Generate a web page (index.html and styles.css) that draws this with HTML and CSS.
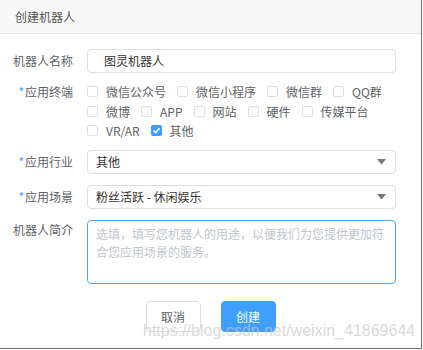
FILE: index.html
```html
<!DOCTYPE html>
<html lang="zh-CN">
<head>
  <meta charset="UTF-8" />
  <title>创建机器人</title>
  <meta name="viewport" content="width=device-width, initial-scale=1.0" />
  <link rel="stylesheet" href="styles.css">
</head>
<body>

<div class="dialog">
  <div class="dialog-header">创建机器人</div>

  <div class="dialog-body">
    <div class="form-row row-name">
      <div class="form-label">机器人名称</div>
      <div class="form-field">
        <div class="input name-input">图灵机器人</div>
      </div>
    </div>

    <div class="form-row row-check">
      <div class="form-label"><span class="req">*</span>应用终端</div>
      <div class="form-field check-group">
        <label class="check"><span class="box"></span>微信公众号</label>
        <label class="check"><span class="box"></span>微信小程序</label>
        <label class="check"><span class="box"></span>微信群</label>
        <label class="check"><span class="box"></span>QQ群</label>
        <label class="check"><span class="box"></span>微博</label>
        <label class="check"><span class="box"></span>APP</label>
        <label class="check"><span class="box"></span>网站</label>
        <label class="check"><span class="box"></span>硬件</label>
        <label class="check"><span class="box"></span>传媒平台</label>
        <label class="check"><span class="box"></span>VR/AR</label>
        <label class="check"><span class="box checked"><svg width="9" height="9" viewBox="0 0 9 9"><path d="M1.6 4.6 L3.7 6.6 L7.4 2.4" fill="none" stroke="#fff" stroke-width="1.6"/></svg></span>其他</label>
      </div>
    </div>

    <div class="form-row row-select">
      <div class="form-label"><span class="req">*</span>应用行业</div>
      <div class="form-field">
        <div class="input select">其他<svg class="arrow" width="9" height="6" viewBox="0 0 9 6"><polygon points="0,0 9,0 4.5,5.5" fill="#777"/></svg></div>
      </div>
    </div>

    <div class="form-row row-select">
      <div class="form-label"><span class="req">*</span>应用场景</div>
      <div class="form-field">
        <div class="input select">粉丝活跃 - 休闲娱乐<svg class="arrow" width="9" height="6" viewBox="0 0 9 6"><polygon points="0,0 9,0 4.5,5.5" fill="#777"/></svg></div>
      </div>
    </div>

    <div class="form-row row-area">
      <div class="form-label">机器人简介</div>
      <div class="form-field">
        <div class="textarea">选填，填写您机器人的用途，以便我们为您提供更加符合您应用场景的服务。</div>
      </div>
    </div>
  </div>

  <div class="dialog-footer">
    <button class="btn">取消</button>
    <button class="btn btn-primary">创建</button>
  </div>

  <div class="watermark">https://blog.csdn.net/weixin_41869644</div>
</div>

</body>
</html>
```

FILE: styles.css
```css
body { margin: 0; background: #fff; font-family: "Noto Sans CJK SC", sans-serif; font-size: 12px; color: #606266; }
.dialog { position: relative; width: 421px; height: 348px; background: #fff; border-right: 1px solid #6e6e6e; border-bottom: 1px solid #6e6e6e; }
.dialog-header { height: 33px; line-height: 33px; padding-left: 15px; background: #f8f8f8; border-bottom: 1px solid #e6e6e6; color: #555; }
.dialog-body { padding: 15px 0 0 0; }
.form-row { display: flex; }
.form-label { width: 73px; text-align: right; line-height: 24px; white-space: nowrap; }
.form-field { margin-left: 14px; width: 309px; }
.req { color: #409eff; margin-right: 1px; }
.row-name { margin-bottom: 9px; }
.row-check { margin-bottom: 9px; }
.row-check .form-label { line-height: 19px; }
.row-select { margin-bottom: 11px; }
.row-area .form-label { line-height: 20px; }
.input { box-sizing: border-box; height: 24px; line-height: 22px; border: 1px solid #dcdfe6; border-radius: 4px; color: #333; padding: 0 8px; }
.name-input { padding-left: 16px; }
.select { display: flex; justify-content: space-between; align-items: center; }
.arrow { margin-right: 1px; }
.check-group { display: flex; flex-wrap: wrap; column-gap: 11px; }
.check { display: inline-flex; align-items: center; height: 19.5px; color: #606266; white-space: nowrap; }
.box { box-sizing: border-box; width: 11px; height: 11px; border: 1px solid #dcdfe6; border-radius: 2px; margin-right: 8px; display: inline-flex; align-items: center; justify-content: center; }
.box.checked { background: #409eff; border-color: #409eff; }
.textarea { box-sizing: border-box; height: 64px; border: 1px solid #4fa3f7; border-radius: 4px; padding: 4px 8px; line-height: 18px; color: #c0c4cc; }
.dialog-footer { display: flex; justify-content: center; gap: 20px; margin-top: 17px; }
.btn { width: 55px; height: 31px; border: 1px solid #dcdfe6; border-radius: 4px; background: #fff; color: #606266; font-family: "Noto Sans CJK SC", sans-serif; font-size: 12px; padding: 0; }
.btn-primary { background: #409eff; border-color: #409eff; color: #fff; }
.watermark { position: absolute; left: 143px; top: 322px; font-family: "Liberation Sans", sans-serif; font-size: 16px; color: rgba(200, 200, 200, 0.7); white-space: nowrap; }
```
